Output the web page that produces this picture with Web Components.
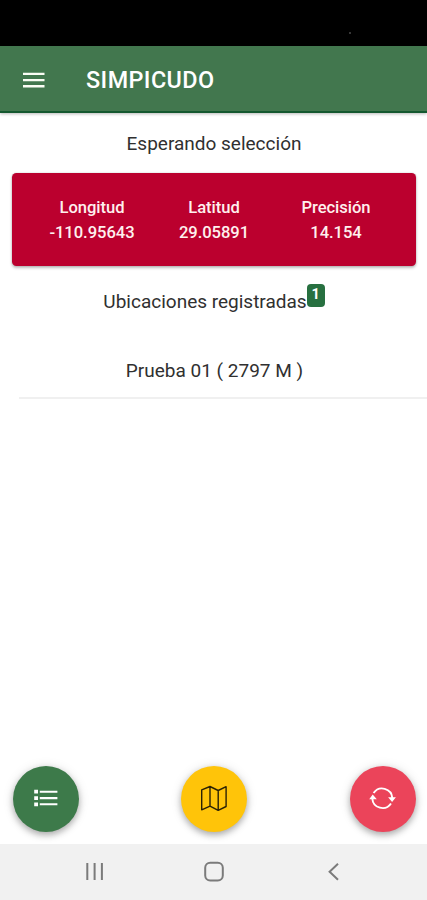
<!DOCTYPE html>
<html lang="es">
<head>
<meta charset="utf-8">
<title>SIMPICUDO</title>
<style>
html, body { margin: 0; height: 100%; background: #fff; }
</style>
</head>
<body>
<simpicudo-app></simpicudo-app>
<script>
const define = (name, html) => {
  const template = document.createElement('template');
  template.innerHTML = html;
  customElements.define(name, class extends HTMLElement {
    constructor() {
      super();
      this.attachShadow({ mode: 'open' }).append(template.content.cloneNode(true));
    }
  });
};

define('status-strip', `
<style>
:host { display: block; height: 46px; background: #000; position: relative; flex: none; }
i { position: absolute; left: 349px; top: 32px; width: 2px; height: 2px; border-radius: 1px; background: #4a4a4a; }
</style><i></i>`);

define('app-toolbar', `
<style>
:host { display: flex; align-items: center; gap: 41px; height: 67px; box-sizing: border-box; padding: 0 0 0 23px;
  background: #42774e; border-bottom: 2px solid #14582f; box-shadow: 0 1px 3px rgba(0,0,0,.28); color: #fff; flex: none; }
svg { display: block; width: 22px; height: 16px; margin-top: 2px; }
h1 { margin: 3px 0 0; font: 500 23.4px/28px Roboto, sans-serif; letter-spacing: .42px; }
</style>
<svg viewBox="0 0 22 16" fill="#fbfdf5"><path d="M0 .7h21.5v2.3H0zM0 6.9h21.5v2.3H0zM0 13.1h21.5v2.3H0z"/></svg>
<h1><slot></slot></h1>`);

define('coord-card', `
<style>
:host { display: grid; grid-template-columns: repeat(3, 122px); justify-content: center; box-sizing: border-box;
  height: 92.6px; margin: 0 11.4px 0 12.4px; padding-top: 21.2px; border-radius: 4.5px; background: #bb002e;
  box-shadow: 0 2px 3px rgba(0,0,0,.25), 0 0 2px rgba(0,0,0,.2); color: #fff0ee; }
</style><slot></slot>`);

define('coord-field', `
<style>
:host { display: block; text-align: center; font: 500 16.6px/25px Roboto, sans-serif; letter-spacing: -.05px; }
span { display: block; }
</style><span><slot name="label"></slot></span><span><slot></slot></span>`);

define('count-badge', `
<style>
:host { display: block; width: 18px; height: 23px; margin-top: -12px; border-radius: 4px; background: #277040; color: #fff;
  font: 700 14.5px/22px Roboto, sans-serif; text-align: center; }
</style><slot></slot>`);

define('text-line', `
<style>
:host { display: flex; justify-content: center; align-items: center; height: 24px; color: #303030;
  font: 400 19px/24px Roboto, sans-serif; padding-left: 1px; }
</style><slot></slot>`);

define('list-row', `
<style>
:host { display: block; margin-left: 19px; height: 57px; box-sizing: border-box; border-bottom: 2px solid #f0f0f0;
  padding: 17px 18px 0 0; }
</style><slot></slot>`);

define('fab-button', `
<style>
:host { display: flex; align-items: center; justify-content: center; width: 66px; height: 66px; border-radius: 50%;
  background: var(--fab); box-shadow: 0 3px 6px rgba(0,0,0,.27), 0 1px 12px rgba(0,0,0,.12); }
</style><slot></slot>`);

define('system-nav', `
<style>
:host { display: block; height: 56px; background: #f1f1f1; flex: none; }
svg { display: block; }
</style>
<svg width="427" height="56" viewBox="0 844 427 56" fill="none" stroke="#7b7b7b" stroke-width="2">
<path d="M87.3 863v17M94.6 863v17M101.9 863v17"/>
<rect x="205.2" y="862.8" width="17.6" height="17.6" rx="5"/>
<path d="M338 863.7l-8.4 8 8.4 8"/></svg>`);

define('simpicudo-app', `
<style>
:host { display: flex; flex-direction: column; width: 427px; height: 900px; font-family: Roboto, sans-serif; }
main { flex: 1; display: flex; flex-direction: column; padding-top: 19px; }
coord-card { margin-top: 17.4px; }
.heading { margin-top: 24px; }
list-row { margin-top: 28px; }
.fabs { margin-top: auto; display: flex; justify-content: space-between; padding: 0 11.5px 12.4px 12.5px; }
svg { display: block; }
</style>
<status-strip></status-strip>
<app-toolbar>SIMPICUDO</app-toolbar>
<main>
  <text-line>Esperando selección</text-line>
  <coord-card>
    <coord-field><span slot="label">Longitud</span>-110.95643</coord-field>
    <coord-field><span slot="label">Latitud</span>29.05891</coord-field>
    <coord-field><span slot="label">Precisión</span>14.154</coord-field>
  </coord-card>
  <text-line class="heading">Ubicaciones registradas<count-badge>1</count-badge></text-line>
  <list-row><text-line>Prueba 01 ( 2797 M )</text-line></list-row>
  <div class="fabs">
    <fab-button style="--fab:#3d7a4a">
      <svg width="28" height="28" viewBox="0 0 28 28" fill="#fff"><path d="M2.2 4.7h3.8v3.8H2.2zM2.2 11.2h3.8v3.8H2.2zM2.2 17.5h3.8v3.8H2.2zM7.8 5.8h17.6v2H7.8zM7.8 11.9h17.6v2.4H7.8zM7.8 18.3h17.6v2H7.8z"/></svg>
    </fab-button>
    <fab-button style="--fab:#ffc409">
      <svg width="28" height="28" viewBox="0 0 28 28" fill="none" stroke="#2b2205" stroke-width="1.4" stroke-linejoin="round"><path d="M1.7 4.9L10 1.5l8.2 4 7.9-3.8v19.8l-7.9 3.9-8.2-4.2-8.3 3.6zM10 1.5v19.7M18.2 5.5v19.9"/></svg>
    </fab-button>
    <fab-button style="--fab:#eb445a">
      <svg width="28" height="28" viewBox="0 0 28 28" fill="none" stroke="#fff" stroke-width="1.9"><path d="M4.6 8.1A10.2 10.2 0 0 1 23.3 13M22 18.4A10.2 10.2 0 0 1 3.3 13.5"/><path fill="#fff" stroke="none" d="M19.1 12.3h7.8L23.1 17zM.2 14.3h7.6L3.7 9.6z"/></svg>
    </fab-button>
  </div>
</main>
<system-nav></system-nav>`);
</script>
</body>
</html>
